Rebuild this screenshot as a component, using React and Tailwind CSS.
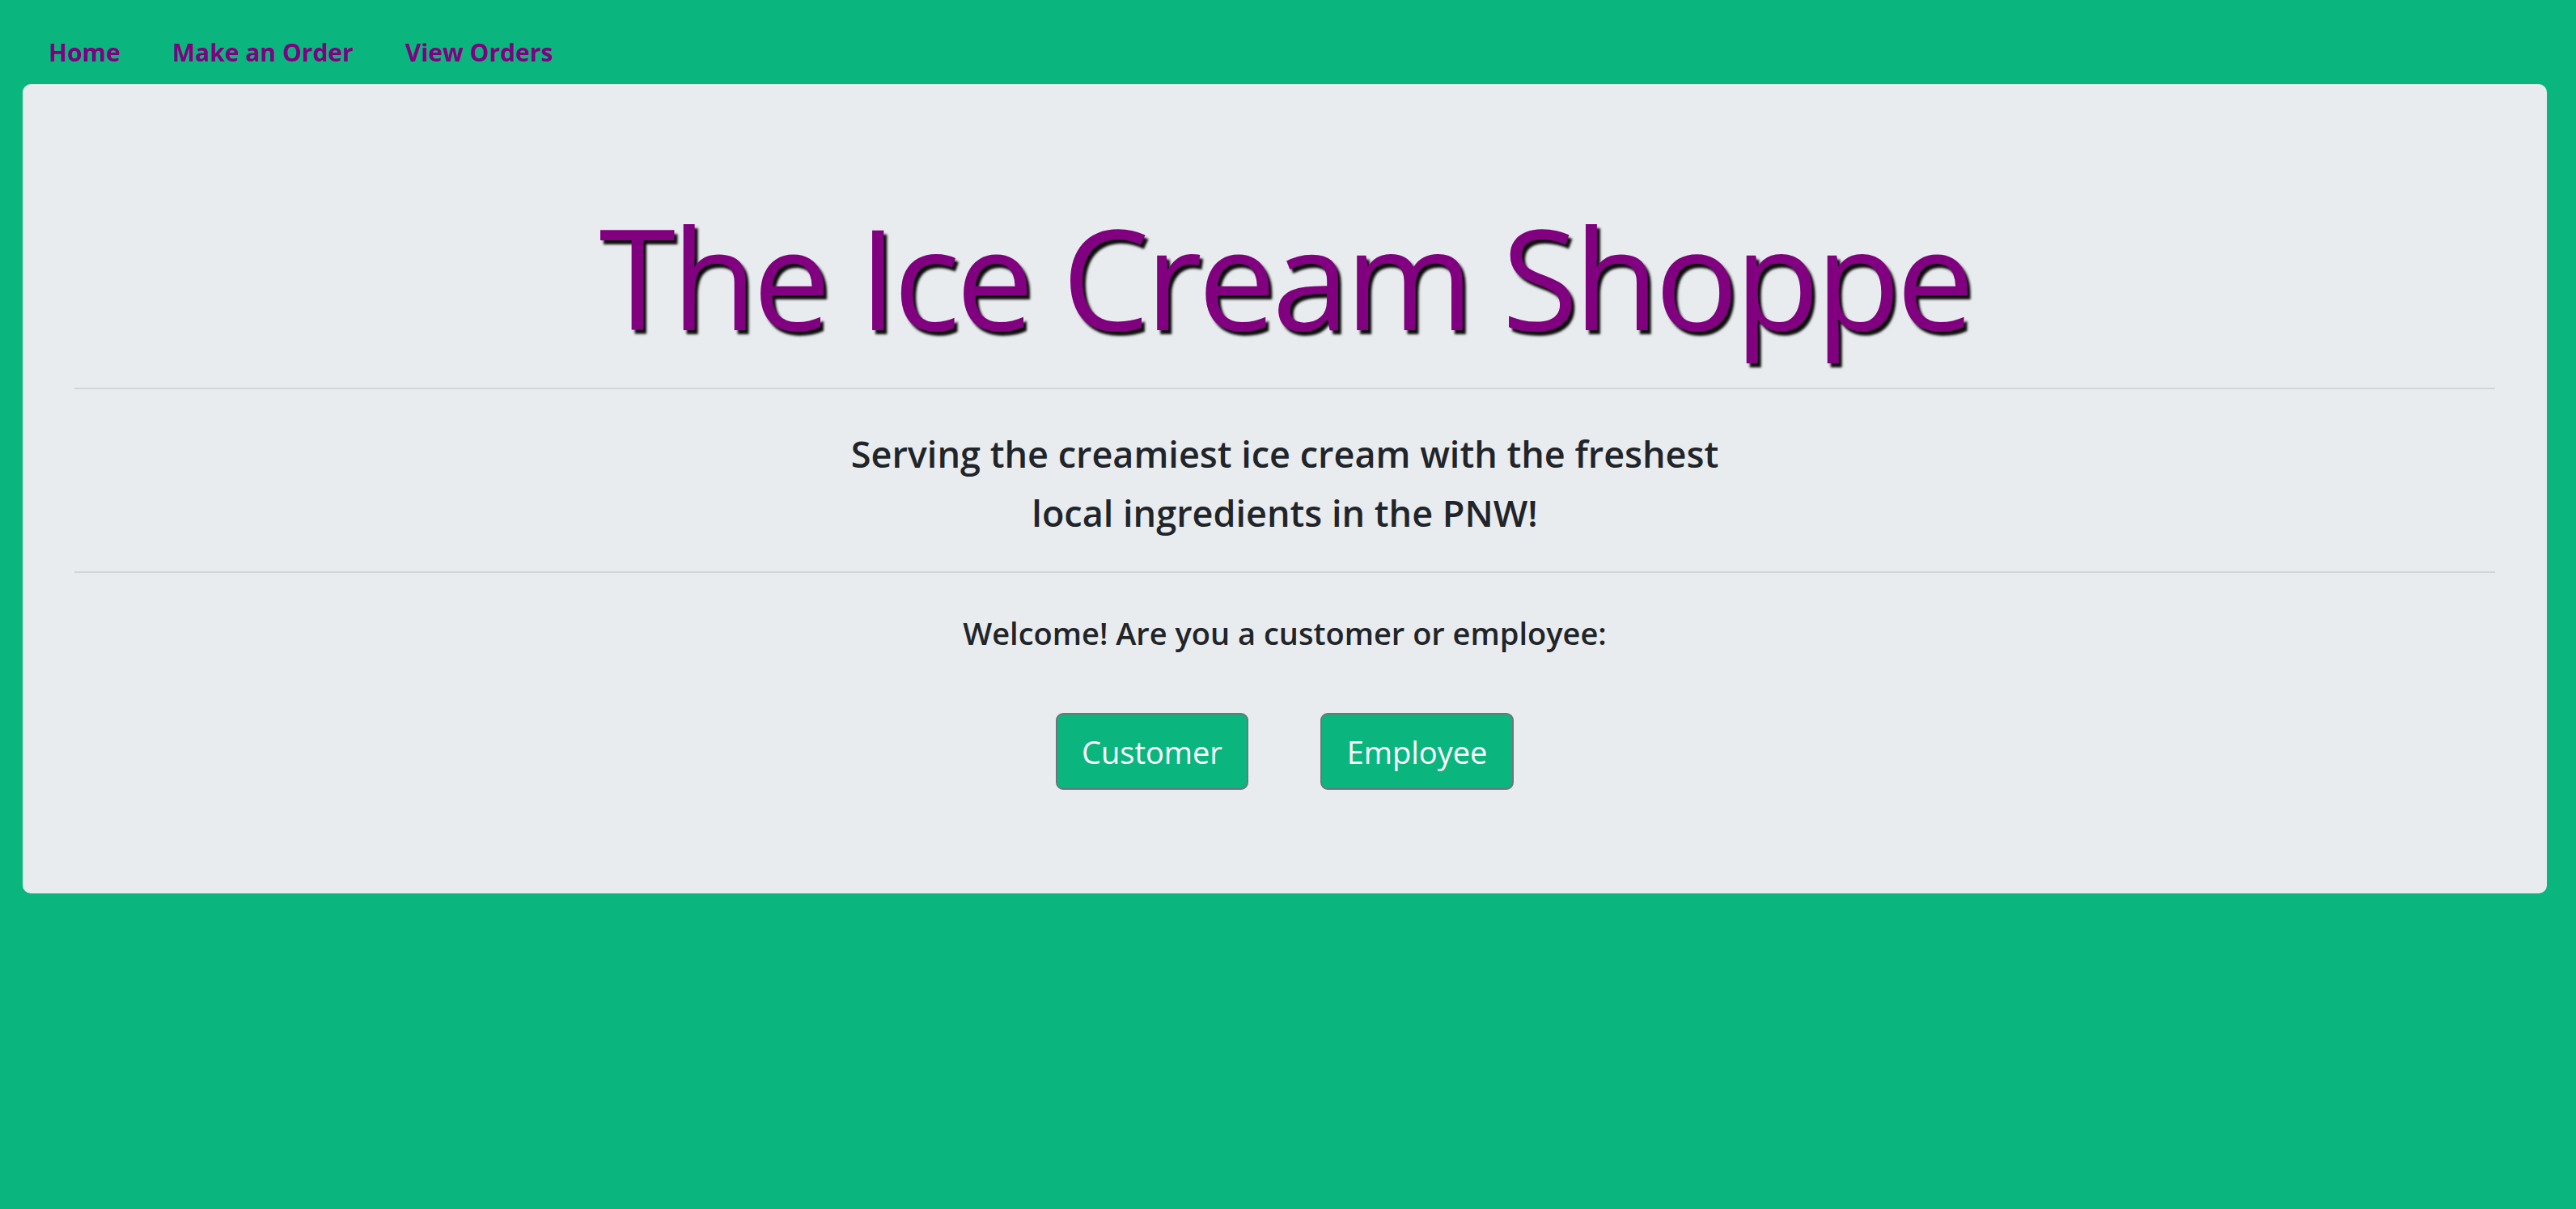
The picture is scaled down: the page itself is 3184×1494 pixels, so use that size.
export default function App() {
  return (
    <div className="min-h-screen bg-[#0ab67e] font-['Open_Sans',sans-serif] text-[#212529]">
      <nav className="flex h-[104px] px-[28px]">
        <a className="px-[32px] pt-[42px] text-[30px] font-bold leading-[46px] text-[#800080]">Home</a>
        <a className="px-[32px] pt-[42px] text-[30px] font-bold leading-[46px] text-[#800080]">Make an Order</a>
        <a className="px-[32px] pt-[42px] text-[30px] font-bold leading-[46px] text-[#800080]">View Orders</a>
      </nav>
      <div className="ml-[28px] mr-[36px] rounded-[10px] bg-[#e9ecef] px-[64px] pt-[122px] pb-[128px]">
        <h1 className="text-center text-[172px] font-medium leading-[230px] tracking-[-0.03em] text-[#800080] [text-shadow:4px_5px_3px_rgba(0,0,0,0.95)]">
          The Ice Cream Shoppe
        </h1>
        <hr className="mt-[23px] border-t-2 border-[#d2d4d7]" />
        <p className="mt-[43px] text-center text-[45px] font-semibold leading-[73px]">
          Serving the creamiest ice cream with the freshest
          <br />
          local ingredients in the PNW!
        </p>
        <hr className="mt-[36px] border-t-2 border-[#d2d4d7]" />
        <p className="mt-[50px] text-center text-[38px] font-semibold leading-[48px]">
          Welcome! Are you a customer or employee:
        </p>
        <div className="mt-[75px] flex justify-center gap-[89px]">
          <button className="h-[95px] w-[238px] rounded-[9px] border-2 border-[#6c757d] bg-[#0ab67e] text-[38px] leading-[60px] text-white">
            Customer
          </button>
          <button className="h-[95px] w-[239px] rounded-[9px] border-2 border-[#6c757d] bg-[#0ab67e] text-[38px] leading-[60px] text-white">
            Employee
          </button>
        </div>
      </div>
    </div>
  );
}
